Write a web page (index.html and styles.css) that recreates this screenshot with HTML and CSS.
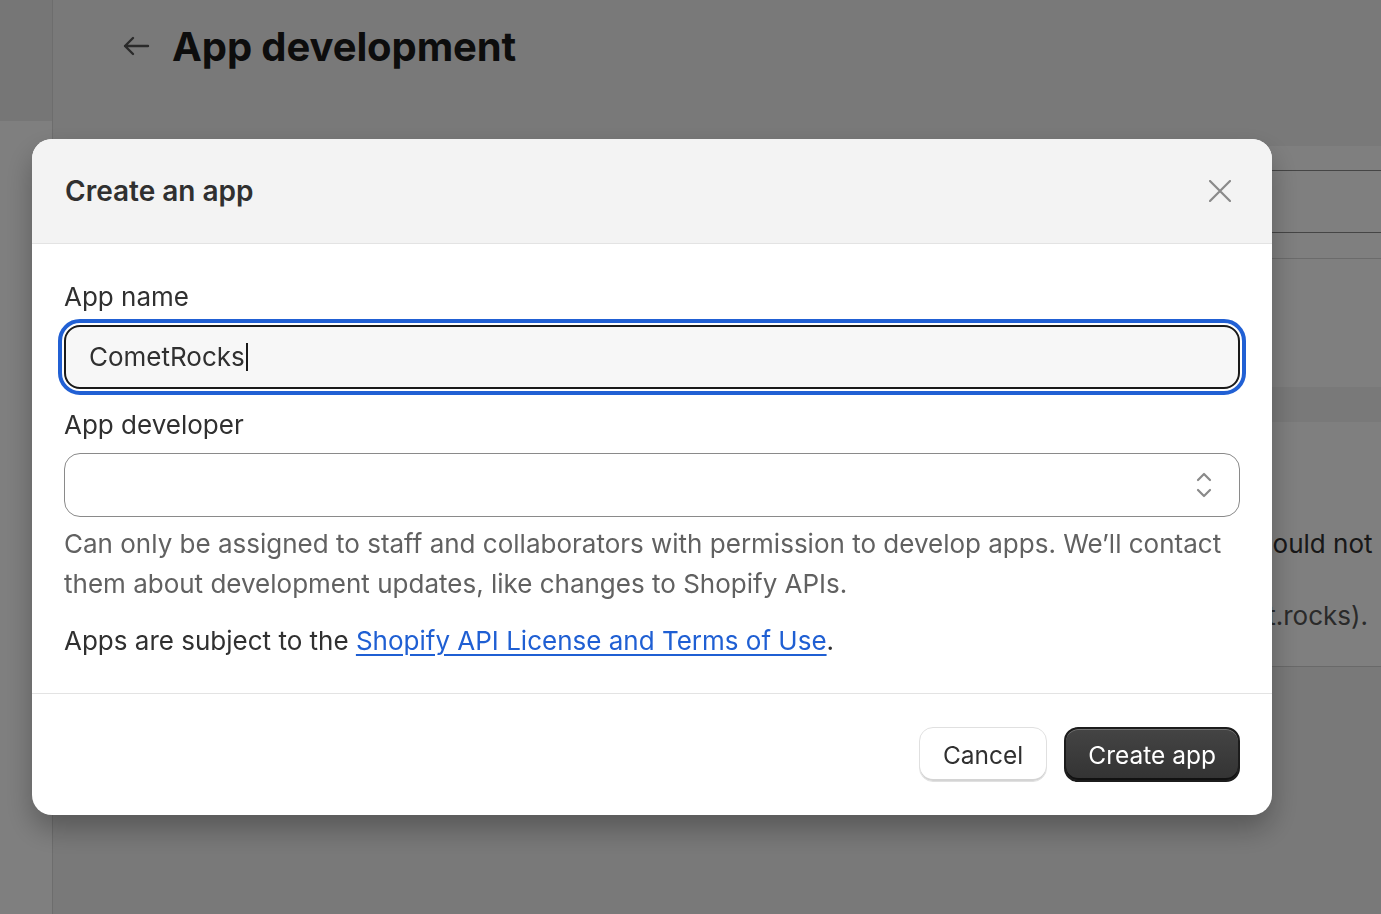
FILE: index.html
```html
<!DOCTYPE html>
<html lang="en">
<head>
<meta charset="utf-8">
<title>App development</title>
<link rel="stylesheet" href="styles.css">
</head>
<body>
<div class="app">
  <aside class="sidebar"><div class="sidebar-top"></div></aside>
  <main class="main">
    <header class="page-header">
      <svg class="back" viewBox="0 0 28 20" aria-hidden="true"><path d="M26 10H3M11 2L3 10l8 8" fill="none" stroke="currentColor" stroke-width="2.4" stroke-linecap="round" stroke-linejoin="round"/></svg>
      <h1>App development</h1>
    </header>
    <div class="layout">
      <div class="side-col">
        <section class="card card-a">
          <div class="field"></div>
          <div class="divider"></div>
        </section>
        <section class="card card-b">
          <p class="note-line">Its URL could not use</p>
          <p class="note-end">(comet.rocks).</p>
        </section>
      </div>
    </div>
  </main>
</div>

<div class="backdrop">
  <div class="modal" role="dialog" aria-labelledby="modal-title">
    <div class="modal-header">
      <h2 id="modal-title">Create an app</h2>
      <svg class="close" viewBox="0 0 22 22" aria-label="Close"><path d="M1 1l20 20M21 1L1 21" fill="none" stroke="currentColor" stroke-width="2.2" stroke-linecap="round"/></svg>
    </div>
    <div class="modal-body">
      <div class="label">App name</div>
      <div class="text-input is-focused"><span>CometRocks</span><span class="caret"></span></div>
      <div class="label label-2">App developer</div>
      <div class="select">
        <svg class="chevrons" viewBox="0 0 20 28" aria-hidden="true"><path d="M4 9l6-6 6 6M4 19l6 6 6-6" fill="none" stroke="currentColor" stroke-width="2.2" stroke-linecap="round" stroke-linejoin="round"/></svg>
      </div>
      <p class="help">Can only be assigned to staff and collaborators with permission to develop apps. We’ll contact them about development updates, like changes to Shopify APIs.</p>
      <p class="terms">Apps are subject to the <a href="#">Shopify API License and Terms of Use</a>.</p>
    </div>
    <div class="modal-footer">
      <button class="btn btn-secondary" type="button">Cancel</button>
      <button class="btn btn-primary" type="button">Create app</button>
    </div>
  </div>
</div>
</body>
</html>
```

FILE: styles.css
```css
* { box-sizing: border-box; }
html, body { margin: 0; padding: 0; }
body {
  width: 1381px;
  height: 914px;
  overflow: hidden;
  font-family: Inter, "Noto Sans", sans-serif;
  color: #303030;
  background: #f3f3f3;
}

/* underlying page */
.app { display: flex; height: 914px; }
.sidebar {
  width: 53px;
  flex: none;
  background: #ffffff;
  border-right: 1px solid #dadada;
}
.sidebar-top { height: 121px; background: #ececec; }
.main { flex: 1; min-width: 0; }
.page-header {
  display: flex;
  align-items: center;
  gap: 22px;
  height: 92px;
  padding-left: 69px;
}
.back { width: 28px; height: 20px; color: #555555; flex: none; }
.page-header h1 {
  margin: 0;
  font-size: 40px;
  font-weight: 700;
  color: #1a1a1a;
  letter-spacing: -0.1px;
}
.layout {
  display: flex;
  justify-content: flex-end;
  margin-top: 54px;
  margin-right: -18px;
}
.side-col {
  width: 300px;
  display: flex;
  flex-direction: column;
  gap: 35px;
}
.card { background: #ffffff; }
.card-a { height: 241px; padding-top: 24px; }
.field { height: 63px; margin-left: 40px; border: 1px solid #8a8a8a; border-right: none; }
.divider { margin-top: 25px; border-top: 1px solid #d6d6d6; }
.card-b {
  height: 245px;
  padding: 102px 32px 0 64px;
  border-bottom: 1px solid #d2d2d2;
  font-size: 26px;
  line-height: 40px;
  overflow: hidden;
}
.note-line { margin: 0; white-space: nowrap; color: #303030; }
.note-end { margin: 32px -1px 0 0; text-align: right; color: #555555; white-space: nowrap; }

/* modal */
.backdrop {
  position: fixed;
  inset: 0;
  background: rgba(0, 0, 0, 0.5);
  padding: 139px 0 0 32px;
}
.modal {
  width: 1240px;
  background: #ffffff;
  border-radius: 20px;
  overflow: hidden;
  box-shadow: 0 14px 28px rgba(0, 0, 0, 0.28);
}
.modal-header {
  height: 105px;
  background: #f3f3f3;
  border-bottom: 1px solid #e3e3e3;
  display: flex;
  align-items: center;
  justify-content: space-between;
  padding: 0 41px 0 33px;
}
.modal-header h2 { margin: 0; font-size: 28px; font-weight: 600; color: #303030; }
.close { width: 22px; height: 22px; color: #8a8a8a; }

.modal-body {
  padding: 33px 32px 32px;
  border-bottom: 1px solid #e3e3e3;
  font-size: 26px;
  line-height: 40px;
}
.label { color: #303030; margin-bottom: 8px; }
.label-2 { margin-top: 16px; }
.text-input {
  height: 64px;
  border: 2px solid #1a1a1a;
  border-radius: 16px;
  background: #f7f7f7;
  display: flex;
  align-items: center;
  padding-left: 23px;
  color: #303030;
}
.text-input.is-focused { outline: 4px solid #2160d4; outline-offset: 2px; }
.caret { width: 2px; height: 28px; background: #1a1a1a; margin-left: 1px; }
.select {
  height: 64px;
  border: 1px solid #8a8a8a;
  border-radius: 16px;
  background: #ffffff;
  display: flex;
  align-items: center;
  justify-content: flex-end;
  padding-right: 25px;
}
.chevrons { width: 20px; height: 28px; color: #8a8a8a; }
.help { margin: 7px 0 0; color: #616161; }
.terms { margin: 17px 0 0; color: #303030; }
.terms a { color: #1f5fd3; text-decoration: underline; text-underline-offset: 4px; }

.modal-footer {
  height: 121px;
  display: flex;
  align-items: center;
  justify-content: flex-end;
  gap: 17px;
  padding-right: 32px;
}
.btn {
  height: 55px;
  border-radius: 14px;
  font-family: inherit;
  font-size: 24.5px;
  cursor: pointer;
}
.btn-secondary {
  padding: 0 23px;
  background: #ffffff;
  color: #303030;
  border: 1px solid #e0e0e0;
  box-shadow: inset 0 -2px 0 #d4d4d4;
}
.btn-primary {
  padding: 0 22px;
  background: linear-gradient(#444444, #333333);
  color: #ffffff;
  border: 2px solid #1c1c1c;
  box-shadow: inset 0 1px 0 rgba(255, 255, 255, 0.25), inset 0 -2px 0 #111111;
}
```
